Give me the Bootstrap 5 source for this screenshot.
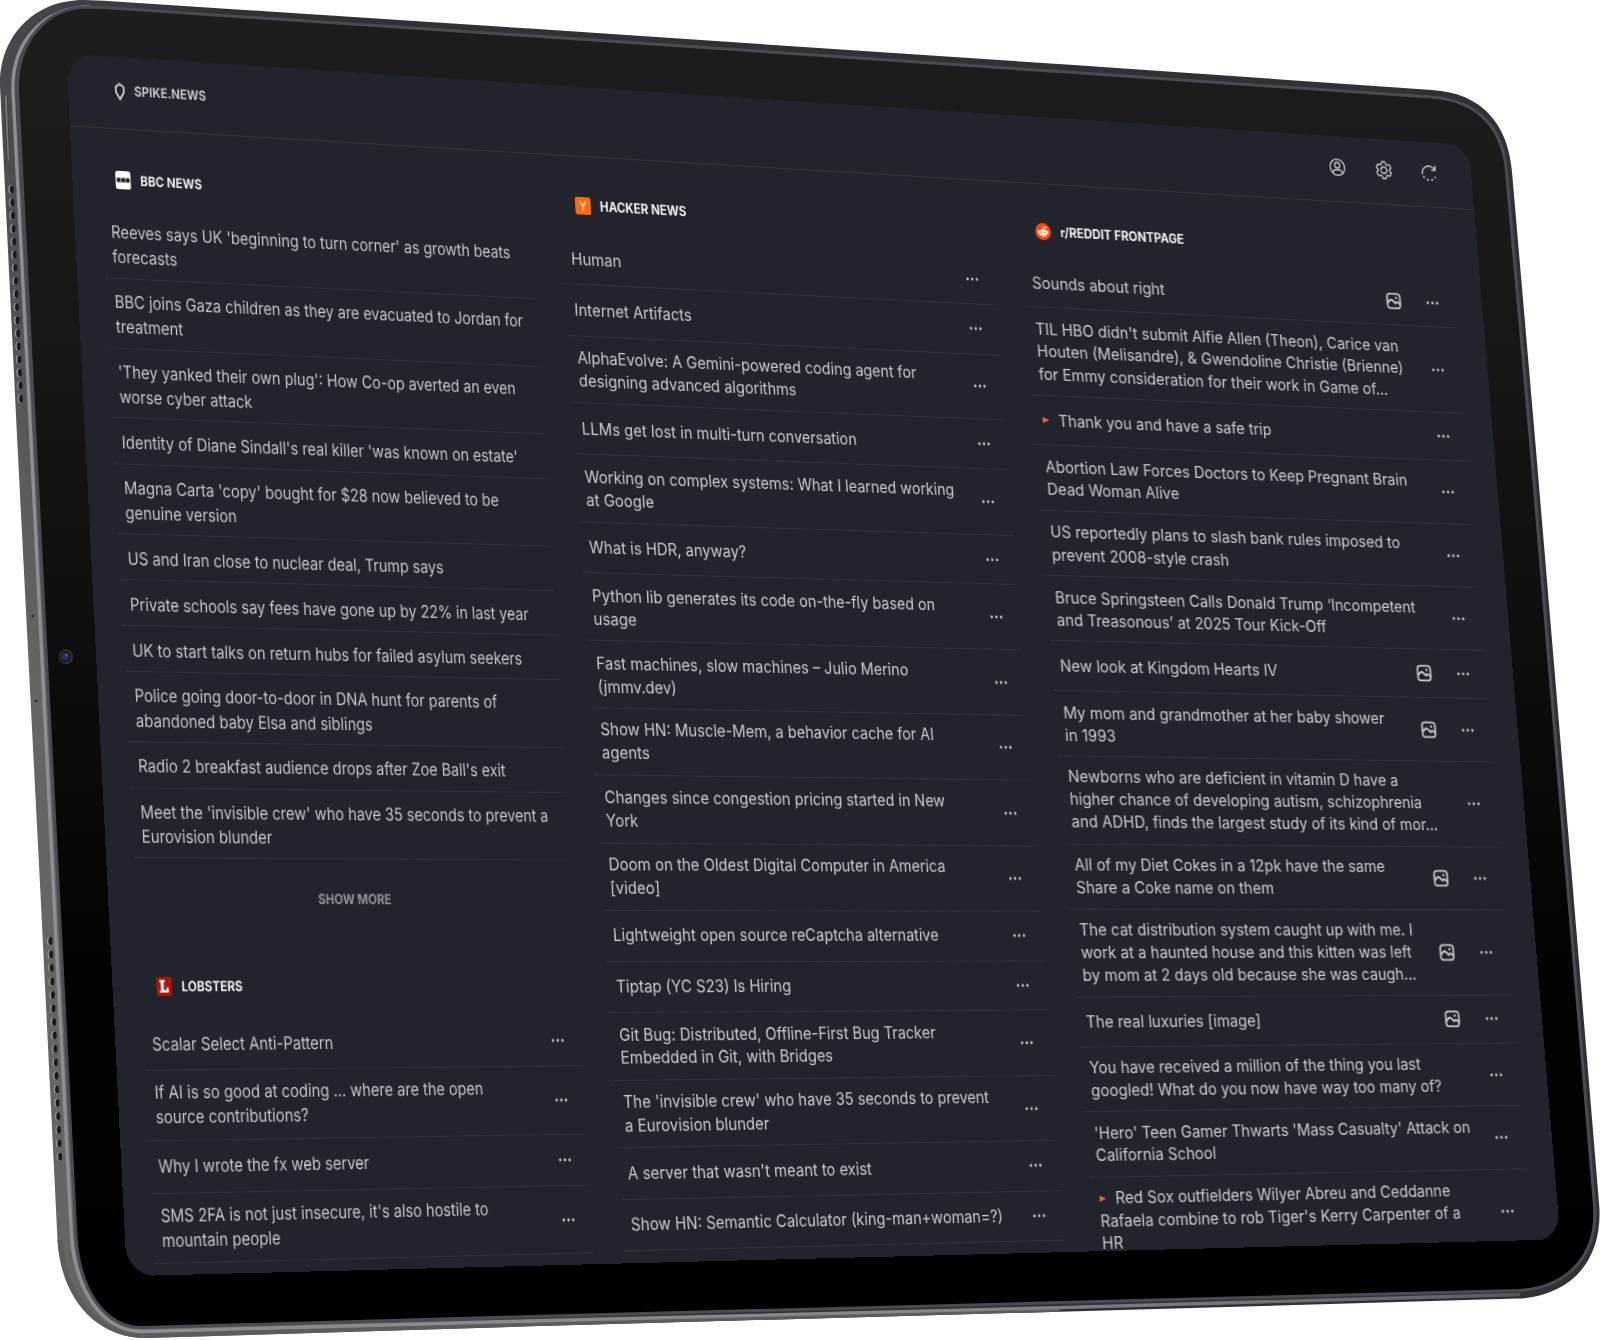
<!DOCTYPE html>
<html lang="en" data-bs-theme="dark">
<head>
<meta charset="utf-8">
<meta name="viewport" content="width=device-width, initial-scale=1">
<title>Spike.news</title>
<link rel="stylesheet" href="https://cdn.jsdelivr.net/npm/bootstrap@5.3.0/dist/css/bootstrap.min.css">
<style>
  body { background: #fff; }
  .stage { width: 1600px; height: 1340px; background: #fff; }
  .device-frame { inset: 0; width: 1600px; height: 1340px; }
  /* Flat 1592x1112 screen projected onto the tilted tablet */
  .screen {
    width: 1592px; height: 1112px; left: 0; top: 0;
    border-radius: 27px; background: #21242c; color: #c9cacd;
    font-family: Inter, "Liberation Sans", sans-serif;
    transform-origin: 0 0;
    transform: matrix3d(.987884,.067842,0,.0000728455, .0512545,1.065859,0,-.000026259, 0,0,1,0, 66.2,53.7,0,1);
  }
  .topbar { height: 68px; border-bottom: 1px solid #35342f; padding: 0 40px 3px 47px; }
  .brand { font-size: 12.8px; font-weight: 700; color: #c4c5c8; transform: scaleX(.92); transform-origin: 0 50%; gap: 9.5px; line-height: 16px; }
  .tools { transform: scaleX(1.09); transform-origin: 100% 50%; gap: 32.6px; padding-right: 2px; }
  .feeds { padding-left: 29.2px; }
  .feed { width: 486px; transform-origin: 0 0; }
  .slot-a { width: 484.6px; } .slot-a .feed { transform: scaleX(.928); }
  .slot-b { width: 521.1px; }
  .slot-c { width: 522px; } .slot-c .feed { transform: scaleX(1.075); }
  .feed-title { padding: 38.5px 0 19px 16.3px; gap: 10px; font-size: 12.8px; line-height: 17px; font-weight: 700; color: #f1f1f2; }
  .story { font-size: 16.3px; line-height: 22.8px; border-bottom: 1px dotted #3c3f44; padding: 0 0 0 8.3px; white-space: nowrap; }
  .slot-b .story, .slot-c .story { line-height: 22.5px; }
  .one { height: 49.6px; } .two { height: 65px; } .three { height: 87.7px; }
  .bare .story { padding-top: 2px; } .bare .one { height: 42.7px; }
  .acts { gap: 28.2px; padding-right: 18px; }
  .show-more { padding: 28.8px 7px 23.5px 0; font-size: 12.8px; line-height: 16px; font-weight: 700; color: #93949a; }
  .play { display: inline-block; border-left: 7px solid #f2604a; border-top: 3.4px solid transparent; border-bottom: 3.4px solid transparent; margin: 0 10px 2px .8px; vertical-align: middle; }
</style>
<script src="https://cdn.jsdelivr.net/npm/bootstrap@5.3.0/dist/js/bootstrap.bundle.min.js"></script>
</head>
<body class="m-0 overflow-hidden">

<svg class="d-none">
  <symbol id="dots" viewBox="0 0 16 6"><g fill="#c1c2c5"><circle cx="2.6" cy="3" r="1.4"/><circle cx="8" cy="3" r="1.4"/><circle cx="13.4" cy="3" r="1.4"/></g></symbol>
  <symbol id="pic" viewBox="0 0 18 18"><g fill="none" stroke="#c8c9cb" stroke-width="1.9" stroke-linecap="round" stroke-linejoin="round"><rect x="1.6" y="1.6" width="14.8" height="14.8" rx="3.2"/><path d="M2 11.2 4.6 8.5Q6.2 7 7.8 8.5L11 11.6M10.6 11.2Q12.2 9.3 13.6 10.3L16 12.2"/></g><circle cx="12" cy="5.7" r="1.2" fill="#c8c9cb"/></symbol>
</svg>

<main class="stage position-relative overflow-hidden">
  <svg class="device-frame position-absolute" viewBox="0 0 1600 1340" aria-hidden="true">
    <defs>
      <linearGradient id="metal" gradientUnits="userSpaceOnUse" x1="40" y1="700" x2="420" y2="560"><stop offset="0" stop-color="#646566"/><stop offset=".3" stop-color="#505155"/><stop offset="1" stop-color="#303137"/></linearGradient>
      <linearGradient id="glass" x1="0" y1="0" x2="0" y2="1"><stop offset="0" stop-color="#1d1d1d"/><stop offset=".25" stop-color="#171717"/><stop offset=".5" stop-color="#0d0d0d"/><stop offset=".75" stop-color="#020202"/><stop offset="1" stop-color="#000"/></linearGradient>
      <linearGradient id="shine" gradientUnits="userSpaceOnUse" x1="0" y1="0" x2="1600" y2="0"><stop offset="0" stop-color="#8e8f92"/><stop offset=".6" stop-color="#858688"/><stop offset=".9" stop-color="#66666b"/><stop offset="1" stop-color="#44444a"/></linearGradient>
      <path id="body" d="M0 86C-1 38 32 0 84 0L104 .8 530 28.6 1070 64.8 1432 90C1482 93 1508 124 1512 172L1536 450 1573 890 1599.4 1208C1602 1262 1570 1296 1518 1298.6L1060 1311.7 530 1326.3 146 1338C94 1338 61 1296 57.5 1240L40.3 890 17.2 440Z"/>
      <clipPath id="bodyClip"><use href="#body"/></clipPath>
    </defs>
    <use href="#body" fill="url(#metal)"/>
    <g clip-path="url(#bodyClip)">
      <path d="M1060 1311 530 1326 146 1338C94 1338 61 1296 57.5 1240" fill="none" stroke="#5c5c5e" stroke-width="10"/>
      <path d="M90 6.5C44 8 11 40 13 92L31 440 53.5 890 71.5 1237C76 1290 101 1331 142 1331.5L530 1321 1060 1307.6 1520 1294.5" fill="none" stroke="url(#shine)" stroke-width="3.4"/>
      <path id="pane" d="M88 7 104 7.6 530 35.8 1070 72.3 1430 97C1478 100 1503 128 1506.5 172L1531.3 450 1568 890 1594.5 1206C1598 1255 1568 1288 1518 1290.5L1060 1302.6 530 1316.5 143 1327.6C104 1327.6 79.5 1290 76 1236L58.3 890 35.2 440 17.6 92C16 42 46 7 88 7Z" fill="url(#glass)" stroke="#494a53" stroke-width="3"/>
    </g>
    <path d="M6.3 94C4.5 94 4.3 98 4.5 103L7 157C7.5 162 9.5 163 9.5 158L7.5 103C7.3 97 7.5 94 6.3 94Z" fill="#77787a" stroke="#38393d" stroke-width=".8"/>
    <g id="grille"></g>
    <circle cx="32.7" cy="616" r="1.3" fill="#2b2b2d"/><circle cx="36.2" cy="701" r="1.3" fill="#2b2b2d"/>
    <ellipse cx="66" cy="656.7" rx="7.2" ry="7.4" fill="#303137"/><ellipse cx="65.5" cy="656.7" rx="5.2" ry="5.6" fill="#15161c"/><ellipse cx="65.3" cy="656.5" rx="3.6" ry="3.8" fill="#26345c"/><circle cx="66.5" cy="655" r="1.2" fill="#4a5a86"/>
  </svg>

  <div class="screen position-absolute overflow-hidden">
    <header class="topbar d-flex justify-content-between align-items-center">
      <div class="brand d-flex align-items-center">
        <svg width="13" height="17" viewBox="0 0 13 17"><path d="M6.5 1.3 2 4.2 2.3 9.5 6.5 15.6 10.7 9.5 11 4.2Z" fill="none" stroke="#d2d2d4" stroke-width="1.9" stroke-linejoin="round"/></svg>
        <span>SPIKE.NEWS</span>
      </div>
      <div class="tools d-flex align-items-center">
        <svg width="20" height="20" viewBox="0 0 20 20" fill="none" stroke="#b9babd" stroke-width="1.6"><circle cx="10" cy="10" r="8.3"/><circle cx="10" cy="8" r="2.9"/><path d="M4.8 16.2C4.8 13.6 6.3 12.7 8 12.7h4c1.7 0 3.2.9 3.2 3.5"/></svg>
        <svg width="20" height="20" viewBox="1.5 1.5 21 21" fill="none" stroke="#b9babd" stroke-width="1.7"><path d="M9.594 3.94c.09-.542.56-.94 1.11-.94h2.593c.55 0 1.02.398 1.11.94l.213 1.281c.063.374.313.686.645.87.074.04.147.083.22.127.325.196.72.257 1.075.124l1.217-.456a1.125 1.125 0 0 1 1.37.49l1.296 2.247a1.125 1.125 0 0 1-.26 1.431l-1.003.827c-.293.241-.438.613-.43.992a7.723 7.723 0 0 1 0 .255c-.008.378.137.75.43.991l1.004.827c.424.35.534.955.26 1.43l-1.298 2.247a1.125 1.125 0 0 1-1.369.491l-1.217-.456c-.355-.133-.75-.072-1.076.124a6.47 6.47 0 0 1-.22.128c-.331.183-.581.495-.644.869l-.213 1.281c-.09.543-.56.94-1.11.94h-2.594c-.55 0-1.019-.398-1.11-.94l-.213-1.281c-.062-.374-.312-.686-.644-.87a6.52 6.52 0 0 1-.22-.127c-.325-.196-.72-.257-1.076-.124l-1.217.456a1.125 1.125 0 0 1-1.369-.49l-1.297-2.247a1.125 1.125 0 0 1 .26-1.431l1.004-.827c.292-.24.437-.613.43-.991a6.932 6.932 0 0 1 0-.255c.007-.38-.138-.751-.43-.992l-1.004-.827a1.125 1.125 0 0 1-.26-1.43l1.297-2.247a1.125 1.125 0 0 1 1.37-.491l1.216.456c.356.133.751.072 1.076-.124.072-.044.146-.086.22-.128.332-.183.582-.495.644-.869l.214-1.28Z"/><circle cx="12" cy="12" r="3.5"/></svg>
        <svg width="20" height="20" viewBox="0 0 20 20" fill="none" stroke="#b9babd" stroke-width="1.7"><path d="M2.2 11.5A8 7.6 0 0 1 16.7 6.2M17.3 2.6V7H12.8"/><path d="M3 13.6a8 7.6 0 0 0 14 0" stroke-dasharray="2.4 2.6"/></svg>
      </div>
    </header>

    <div class="feeds d-flex">
      <div class="slot-a flex-shrink-0"><div class="feed">
        <section class="bare">
          <h2 class="feed-title d-flex align-items-center m-0"><svg width="17" height="17" viewBox="0 0 17 17"><rect width="17" height="17" rx="2.5" fill="#fff"/><path d="M1.5 6.4h4.2v4.2H1.5zM6.5 6.4h4.2v4.2H6.5zM11.5 6.4h4v4.2h-4z" fill="#17181b"/></svg>BBC NEWS</h2>
          <div class="story two">Reeves says UK 'beginning to turn corner' as growth beats<br>forecasts</div>
          <div class="story two">BBC joins Gaza children as they are evacuated to Jordan for<br>treatment</div>
          <div class="story two">'They yanked their own plug': How Co-op averted an even<br>worse cyber attack</div>
          <div class="story one">Identity of Diane Sindall's real killer 'was known on estate'</div>
          <div class="story two">Magna Carta 'copy' bought for $28 now believed to be<br>genuine version</div>
          <div class="story one">US and Iran close to nuclear deal, Trump says</div>
          <div class="story one">Private schools say fees have gone up by 22% in last year</div>
          <div class="story one">UK to start talks on return hubs for failed asylum seekers</div>
          <div class="story two">Police going door-to-door in DNA hunt for parents of<br>abandoned baby Elsa and siblings</div>
          <div class="story one">Radio 2 breakfast audience drops after Zoe Ball's exit</div>
          <div class="story two">Meet the 'invisible crew' who have 35 seconds to prevent a<br>Eurovision blunder</div>
          <div class="show-more text-center">SHOW MORE</div>
        </section>
        <section class="dotted">
          <h2 class="feed-title d-flex align-items-center m-0"><svg width="17" height="17" viewBox="0 0 17 17"><rect width="17" height="17" rx="2" fill="#ac130d"/><path d="M3.5 2.8h6v1.6H8v7.4h3.2V9.6h2V14H3.5v-1.6H5V4.4H3.5z" fill="#fff"/></svg>LOBSTERS</h2>
          <div class="story one">Scalar Select Anti-Pattern</div>
          <div class="story two">If AI is so good at coding ... where are the open<br>source contributions?</div>
          <div class="story one">Why I wrote the fx web server</div>
          <div class="story two">SMS 2FA is not just insecure, it's also hostile to<br>mountain people</div>
        </section>
      </div></div>

      <div class="slot-b flex-shrink-0"><div class="feed">
        <section class="dotted">
          <h2 class="feed-title d-flex align-items-center m-0"><svg width="17" height="17" viewBox="0 0 17 17"><rect width="17" height="17" rx="2" fill="#ff6a0d"/><path d="M5.2 3.8 8.5 9.3 11.8 3.8M8.5 9v4.4" fill="none" stroke="#ffe3cf" stroke-width="1.4"/></svg>HACKER NEWS</h2>
          <div class="story one">Human</div>
          <div class="story one">Internet Artifacts</div>
          <div class="story two">AlphaEvolve: A Gemini-powered coding agent for<br>designing advanced algorithms</div>
          <div class="story one">LLMs get lost in multi-turn conversation</div>
          <div class="story two">Working on complex systems: What I learned working<br>at Google</div>
          <div class="story one">What is HDR, anyway?</div>
          <div class="story two">Python lib generates its code on-the-fly based on<br>usage</div>
          <div class="story two">Fast machines, slow machines – Julio Merino<br>(jmmv.dev)</div>
          <div class="story two">Show HN: Muscle-Mem, a behavior cache for AI<br>agents</div>
          <div class="story two">Changes since congestion pricing started in New<br>York</div>
          <div class="story two">Doom on the Oldest Digital Computer in America<br>[video]</div>
          <div class="story one">Lightweight open source reCaptcha alternative</div>
          <div class="story one">Tiptap (YC S23) Is Hiring</div>
          <div class="story two">Git Bug: Distributed, Offline-First Bug Tracker<br>Embedded in Git, with Bridges</div>
          <div class="story two">The 'invisible crew' who have 35 seconds to prevent<br>a Eurovision blunder</div>
          <div class="story one">A server that wasn't meant to exist</div>
          <div class="story one">Show HN: Semantic Calculator (king-man+woman=?)</div>
        </section>
      </div></div>

      <div class="slot-c flex-shrink-0"><div class="feed">
        <section class="dotted">
          <h2 class="feed-title d-flex align-items-center m-0"><svg width="17" height="17" viewBox="0 0 17 17"><circle cx="8.5" cy="8.5" r="8.5" fill="#ff4a0f"/><ellipse cx="8.5" cy="9.8" rx="4.8" ry="3.6" fill="#fff"/><circle cx="3.9" cy="8.7" r="1.3" fill="#fff"/><circle cx="13.1" cy="8.7" r="1.3" fill="#fff"/><path d="M8.5 6.5 9.3 3.8l2 .5" fill="none" stroke="#fff" stroke-width=".8"/><circle cx="11.7" cy="4.3" r="1" fill="#fff"/><circle cx="6.7" cy="9.3" r=".95" fill="#ff4a0f"/><circle cx="10.3" cy="9.3" r=".95" fill="#ff4a0f"/><path d="M6.6 11.5q1.9 1.2 3.8 0" fill="none" stroke="#ff4a0f" stroke-width=".6"/></svg>r/REDDIT FRONTPAGE</h2>
          <div class="story one pic">Sounds about right</div>
          <div class="story three">TIL HBO didn't submit Alfie Allen (Theon), Carice van<br>Houten (Melisandre), &amp; Gwendoline Christie (Brienne)<br>for Emmy consideration for their work in Game of…</div>
          <div class="story one"><i class="play"></i>Thank you and have a safe trip</div>
          <div class="story two">Abortion Law Forces Doctors to Keep Pregnant Brain<br>Dead Woman Alive</div>
          <div class="story two">US reportedly plans to slash bank rules imposed to<br>prevent 2008-style crash</div>
          <div class="story two">Bruce Springsteen Calls Donald Trump ‘Incompetent<br>and Treasonous’ at 2025 Tour Kick-Off</div>
          <div class="story one pic">New look at Kingdom Hearts IV</div>
          <div class="story two pic">My mom and grandmother at her baby shower<br>in 1993</div>
          <div class="story three">Newborns who are deficient in vitamin D have a<br>higher chance of developing autism, schizophrenia<br>and ADHD, finds the largest study of its kind of mor…</div>
          <div class="story two pic">All of my Diet Cokes in a 12pk have the same<br>Share a Coke name on them</div>
          <div class="story three pic">The cat distribution system caught up with me. I<br>work at a haunted house and this kitten was left<br>by mom at 2 days old because she was caugh…</div>
          <div class="story one pic">The real luxuries [image]</div>
          <div class="story two">You have received a million of the thing you last<br>googled! What do you now have way too many of?</div>
          <div class="story two">'Hero' Teen Gamer Thwarts 'Mass Casualty' Attack on<br>California School</div>
          <div class="story three"><i class="play"></i>Red Sox outfielders Wilyer Abreu and Ceddanne<br>Rafaela combine to rob Tiger's Kerry Carpenter of a<br>HR</div>
        </section>
      </div></div>
    </div>
  </div>
</main>

<script>
  // Wrap each headline, and append its action icons
  document.querySelectorAll('.story').forEach(row => {
    const acts = row.closest('.dotted')
      ? '<span class="acts d-flex align-items-center">' +
        (row.classList.contains('pic') ? '<svg width="18" height="18"><use href="#pic"/></svg>' : '') +
        '<svg width="16" height="6"><use href="#dots"/></svg></span>'
      : '';
    row.innerHTML = '<span>' + row.innerHTML + '</span>' + acts;
    row.classList.add('d-flex', 'align-items-center', 'justify-content-between');
  });
  // Rows and their lines get slightly shorter towards the lower edge of the screen
  document.querySelectorAll('.story').forEach(row => {
    const v = (68 + row.offsetTop + row.offsetHeight / 2) / 1112;
    const s = 1.012 - 0.057 * v, cs = getComputedStyle(row);
    const h = parseFloat(cs.height), l = parseFloat(cs.lineHeight);
    row.style.height = (h * s).toFixed(2) + 'px';
    row.style.lineHeight = (l * s).toFixed(2) + 'px';
  });
  // Speaker holes along the left side
  const grille = document.getElementById('grille');
  [[11.5, 189.3, 20.8, 398.7], [50.2, 941, 59.8, 1156.7]].forEach(([x1, y1, x2, y2]) => {
    for (let i = 0; i < 17; i++) {
      const x = x1 + (x2 - x1) * i / 16, y = y1 + (y2 - y1) * i / 16;
      grille.innerHTML += `<ellipse cx="${x - .8}" cy="${y}" rx="2.4" ry="4.2" fill="#919294"/><ellipse cx="${x + .3}" cy="${y}" rx="2" ry="3.9" fill="#1b1c20"/>`;
    }
  });
</script>
</body>
</html>
